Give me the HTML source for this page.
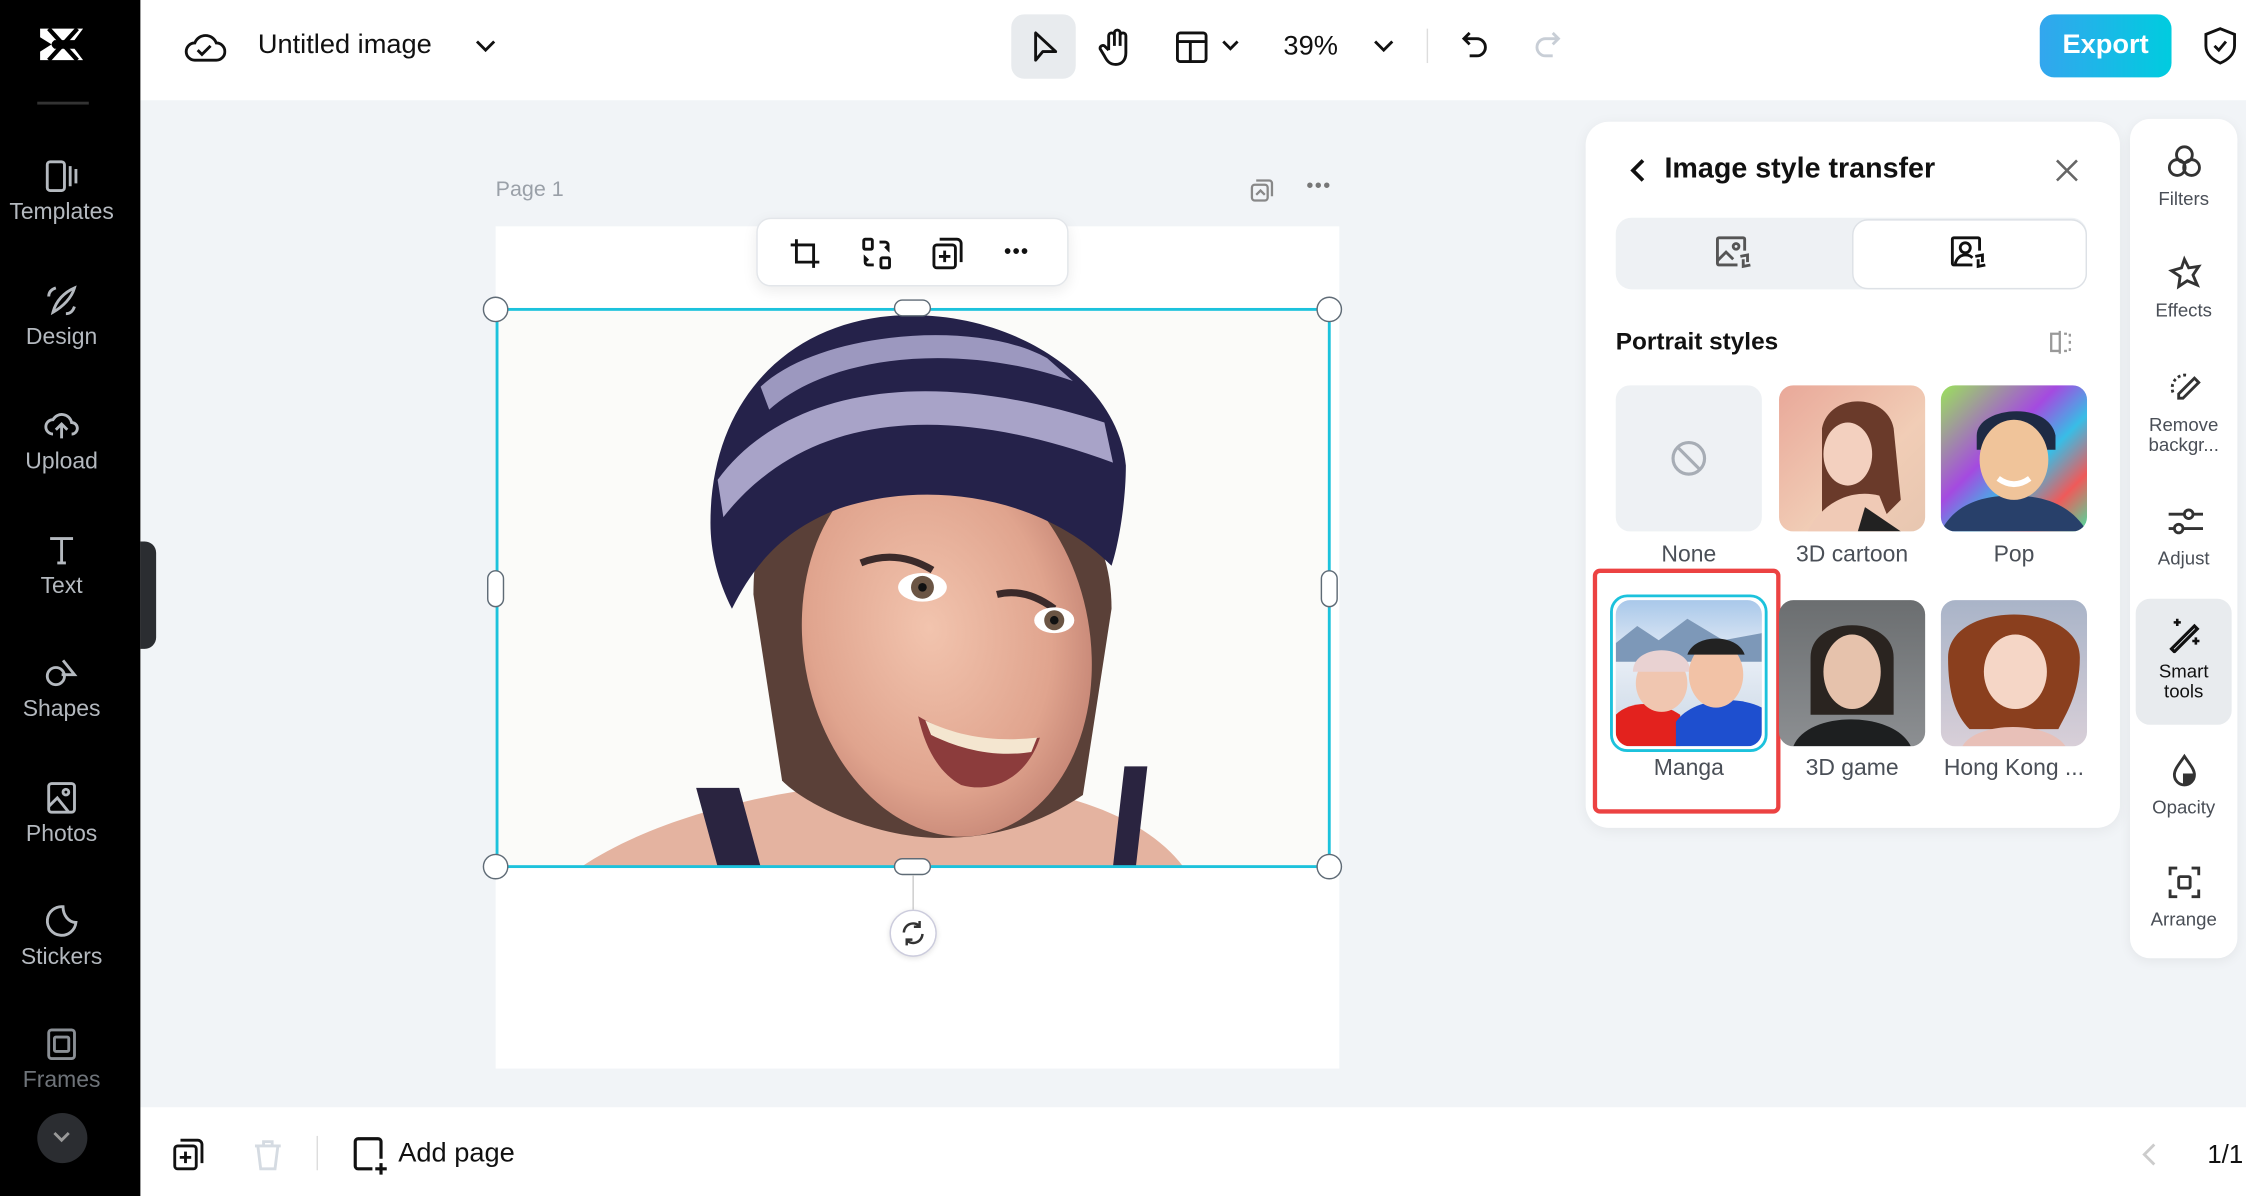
<!DOCTYPE html>
<html><head><meta charset="utf-8">
<style>
*{box-sizing:border-box;margin:0;padding:0}
html,body{width:2246px;height:1196px;overflow:hidden;background:#fff}
#w{width:1568px;height:835px;transform:scale(1.43240);transform-origin:0 0;position:relative;font-family:"Liberation Sans",sans-serif;color:#111}
.abs{position:absolute}
.sb{left:0;top:0;width:98px;height:835px;background:#000}
.si{position:absolute;left:0;width:86px;text-align:center;color:#b4b9bf;font-size:16px}
.si svg{display:block;margin:0 auto 4px}
.rc{position:absolute;left:1487px;top:83px;width:75px;height:586px;background:#fff;border-radius:14px;box-shadow:0 2px 8px rgba(0,0,0,.06)}
.ri{position:absolute;left:1487px;width:75px;text-align:center;color:#4a4f57;font-size:13px;line-height:14px}
.ri svg{display:block;margin:0 auto 6px}
.th{position:absolute;width:102px;height:102px;border-radius:10px;overflow:hidden}
.lb{position:absolute;width:130px;text-align:center;font-size:16px;color:#4a4f57}
</style></head><body><div id="w">
<div class="abs" style="left:98px;top:70px;width:1470px;height:703px;background:#f1f4f7"></div>
<div class="abs sb"></div>
<svg class="abs" style="left:26px;top:16px" width="36" height="30" viewBox="0 0 36 30"><path d="M2 4h30l-6 8H12q-4 3 0 6h14l6 8H2v-6l8-5-8-5z" fill="#fff"/><path d="M8 4l20 22M28 4L8 26" stroke="#000" stroke-width="3"/></svg>
<div class="abs" style="left:26px;top:71px;width:36px;height:2px;background:#333"></div>
<div class="si" style="top:110px"><svg width="26" height="26" viewBox="0 0 26 26" fill="none" stroke="#b4b9bf" stroke-width="2"><rect x="3" y="3" width="12" height="20" rx="2"/><path d="M19 6v14M23 8v10"/></svg>Templates</div>
<div class="si" style="top:197px"><svg width="26" height="26" viewBox="0 0 26 26" fill="none" stroke="#b4b9bf" stroke-width="2"><path d="M7 21c2-8 8-14 15-17-2 7-8 13-15 17z"/><path d="M9 4c-3 1-5 3-5 6M22 17c-1 3-3 5-6 5"/></svg>Design</div>
<div class="si" style="top:284px"><svg width="26" height="26" viewBox="0 0 26 26" fill="none" stroke="#b4b9bf" stroke-width="2"><path d="M7 19a5 5 0 010-10 7 7 0 0113 2 4 4 0 010 8M13 22v-9M9 16l4-4 4 4"/></svg>Upload</div>
<div class="si" style="top:371px"><svg width="26" height="26" viewBox="0 0 26 26" fill="none" stroke="#b4b9bf" stroke-width="2"><path d="M5 5h16M13 5v17M10 22h6"/></svg>Text</div>
<div class="si" style="top:457px"><svg width="26" height="26" viewBox="0 0 26 26" fill="none" stroke="#b4b9bf" stroke-width="2"><circle cx="9" cy="15" r="6"/><path d="M14 4l8 10h-9"/></svg>Shapes</div>
<div class="si" style="top:544px"><svg width="26" height="26" viewBox="0 0 26 26" fill="none" stroke="#b4b9bf" stroke-width="2"><rect x="4" y="3" width="18" height="20" rx="2"/><circle cx="16" cy="9" r="2"/><path d="M4 19l6-6 8 10"/></svg>Photos</div>
<div class="si" style="top:630px"><svg width="26" height="26" viewBox="0 0 26 26" fill="none" stroke="#b4b9bf" stroke-width="2"><path d="M14 3a10 10 0 1 0 9 11c-5 0-9-5-9-11z"/></svg>Stickers</div>
<div class="si" style="top:716px;color:#6f747a"><svg width="26" height="26" viewBox="0 0 26 26" fill="none" stroke="#8a8f95" stroke-width="2"><rect x="4" y="3" width="18" height="20" rx="2"/><rect x="8" y="8" width="10" height="10" rx="1"/></svg>Frames</div>
<div class="abs" style="left:26px;top:777px;width:35px;height:35px;border-radius:50%;background:#2b2d31"></div>
<svg class="abs" style="left:36px;top:788px" width="14" height="12"><path d="M2 3l5 5 5-5" stroke="#999" stroke-width="2" fill="none"/></svg>
<div class="abs" style="left:98px;top:378px;width:11px;height:75px;background:#2b2d31;border-radius:0 8px 8px 0"></div>
<svg class="abs" style="left:128px;top:18px" width="30" height="28" viewBox="0 0 30 28" fill="none" stroke="#111" stroke-width="2"><path d="M8 24a6 6 0 010-12 8 8 0 0115 0 6 6 0 010 12z"/><path d="M10 17l3 3 6-6"/></svg>
<div class="abs" style="left:180px;top:21px;font-size:19px;">Untitled image</div>
<svg class="abs" style="left:331px;top:26px" width="16" height="12"><path d="M2 3l6 6 6-6" stroke="#111" stroke-width="2" fill="none"/></svg>
<div class="abs" style="left:706px;top:10px;width:45px;height:45px;background:#e8ebee;border-radius:9px"></div>
<svg class="abs" style="left:718px;top:20px" width="24" height="26" viewBox="0 0 24 26"><path d="M5 3v19l5-6h9z" fill="none" stroke="#111" stroke-width="2" stroke-linejoin="round"/></svg>
<svg class="abs" style="left:766px;top:19px" width="26" height="28" viewBox="0 0 26 28" fill="none" stroke="#111" stroke-width="2"><path d="M8 16V6a2 2 0 014 0v7V4a2 2 0 014 0v9V6a2 2 0 014 0v12c0 5-3 8-7 8s-6-2-8-6l-3-5a2 2 0 013-2l3 3"/></svg>
<svg class="abs" style="left:820px;top:21px" width="24" height="24" viewBox="0 0 24 24" fill="none" stroke="#111" stroke-width="2"><rect x="2" y="2" width="20" height="20" rx="2"/><path d="M2 8h20M11 8v14"/></svg>
<svg class="abs" style="left:852px;top:27px" width="14" height="10"><path d="M2 2l5 5 5-5" stroke="#111" stroke-width="2" fill="none"/></svg>
<div class="abs" style="left:896px;top:22px;font-size:19px">39%</div>
<svg class="abs" style="left:958px;top:27px" width="16" height="10"><path d="M2 2l6 6 6-6" stroke="#111" stroke-width="2" fill="none"/></svg>
<div class="abs" style="left:996px;top:20px;width:1px;height:24px;background:#ddd"></div>
<svg class="abs" style="left:1018px;top:20px" width="24" height="24" viewBox="0 0 24 24" fill="none" stroke="#111" stroke-width="2"><path d="M8 3L4 7l4 4M4 7h9a6 6 0 010 12H8"/></svg>
<svg class="abs" style="left:1068px;top:20px" width="24" height="24" viewBox="0 0 24 24" fill="none" stroke="#c8ced6" stroke-width="2"><path d="M16 3l4 4-4 4M20 7h-9a6 6 0 000 12h5"/></svg>
<div class="abs" style="left:1424px;top:10px;width:92px;height:44px;border-radius:10px;background:linear-gradient(90deg,#33a6ee,#00ccdf);color:#fff;font-size:19px;font-weight:bold;text-align:center;line-height:44px">Export</div>
<svg class="abs" style="left:1537px;top:18px" width="26" height="28" viewBox="0 0 26 28" fill="none" stroke="#111" stroke-width="2"><path d="M13 2l10 4v8c0 6-5 10-10 12C8 24 3 20 3 14V6z"/><path d="M9 14l3 3 5-6"/></svg>
<div class="abs" style="left:346px;top:124px;font-size:15px;color:#9aa0a8">Page 1</div>
<svg class="abs" style="left:872px;top:124px" width="18" height="18" viewBox="0 0 18 18" fill="none" stroke="#888" stroke-width="1.6"><rect x="2" y="5" width="11" height="11" rx="2"/><path d="M5 2h9a2 2 0 012 2v9"/><path d="M5 12l3-3 3 3"/></svg>
<div class="abs" style="left:912px;top:121px;font-size:14px;color:#777;letter-spacing:1px">•••</div>
<div class="abs" style="left:346px;top:158px;width:589px;height:588px;background:#fff"></div>
<svg class="abs" style="left:346px;top:215px" width="582" height="390" viewBox="0 0 582 390">
<defs><radialGradient id="sk" cx=".45" cy=".45" r=".6"><stop offset="0" stop-color="#f2c4ae"/><stop offset=".7" stop-color="#e0a48e"/><stop offset="1" stop-color="#c48474"/></radialGradient></defs>
<rect width="582" height="390" fill="#fbfbf9"/>
<path d="M60 390c60-40 160-60 240-60s150 20 180 60z" fill="#e4b3a0"/>
<path d="M180 200c0-80 40-100 120-100s130 40 130 110l-20 130c-30 20-60 30-100 30s-90-20-110-40z" fill="#5a4038"/>
<ellipse cx="315" cy="235" rx="100" ry="135" fill="url(#sk)" transform="rotate(-10 315 235)"/>
<path d="M150 150c0-90 60-145 140-145s145 50 150 105c0 25-5 55-10 70-50-50-130-60-190-40-40 15-60 40-75 70-10-20-15-40-15-60z" fill="#25224a"/>
<path d="M155 120c40-55 130-85 270-40l6 28c-130-48-220-28-272 38z" fill="#a8a3c8"/>
<path d="M185 55c40-38 150-48 200-20l18 16c-80-28-170-18-212 20z" fill="#9c98bf"/>
<path d="M255 178q25-10 50 5M350 200q20-5 40 10" stroke="#3b2a2a" stroke-width="5" fill="none"/>
<ellipse cx="298" cy="195" rx="17" ry="10" fill="#fff"/><circle cx="298" cy="195" r="8" fill="#6b5544"/><circle cx="298" cy="195" r="3" fill="#111"/>
<ellipse cx="390" cy="218" rx="14" ry="9" fill="#fff"/><circle cx="390" cy="218" r="7" fill="#6b5544"/><circle cx="390" cy="218" r="3" fill="#111"/>
<path d="M295 285c25 15 55 20 85 15-8 25-30 40-55 33-15-8-25-25-30-48z" fill="#8c3c3c"/>
<path d="M300 288c25 12 50 15 78 12l-4 10c-25 4-50-2-70-12z" fill="#f4e6d0"/>
<path d="M140 335l15 55h30l-15-55zM455 320l-8 70h-16l8-70z" fill="#2a2440"/>
</svg>
<div class="abs" style="left:346px;top:215px;width:583px;height:391px;border:2px solid #1cc2dc"></div>
<div class="abs" style="left:337px;top:207px;width:18px;height:18px;border-radius:50%;background:#fff;border:1.5px solid #5f6b76"></div>
<div class="abs" style="left:919px;top:207px;width:18px;height:18px;border-radius:50%;background:#fff;border:1.5px solid #5f6b76"></div>
<div class="abs" style="left:337px;top:596px;width:18px;height:18px;border-radius:50%;background:#fff;border:1.5px solid #5f6b76"></div>
<div class="abs" style="left:919px;top:596px;width:18px;height:18px;border-radius:50%;background:#fff;border:1.5px solid #5f6b76"></div>
<div class="abs" style="left:624px;top:209px;width:26px;height:12px;border-radius:6px;background:#fff;border:1.5px solid #5f6b76"></div>
<div class="abs" style="left:624px;top:599px;width:26px;height:12px;border-radius:6px;background:#fff;border:1.5px solid #5f6b76"></div>
<div class="abs" style="left:340px;top:398px;width:12px;height:26px;border-radius:6px;background:#fff;border:1.5px solid #5f6b76"></div>
<div class="abs" style="left:922px;top:398px;width:12px;height:26px;border-radius:6px;background:#fff;border:1.5px solid #5f6b76"></div>
<div class="abs" style="left:637px;top:611px;width:1px;height:24px;background:#ccc"></div>
<div class="abs" style="left:621px;top:635px;width:33px;height:33px;border-radius:50%;background:#fff;border:1px solid #ccd;box-shadow:0 1px 4px rgba(0,0,0,.12)"></div>
<svg class="abs" style="left:628px;top:642px" width="19" height="19" viewBox="0 0 19 19" fill="none" stroke="#333" stroke-width="1.7"><path d="M3 9a6.5 6.5 0 0111-4.5M16 10a6.5 6.5 0 01-11 4.5M14 1v4h-4M5 18v-4h4"/></svg>
<div class="abs" style="left:528px;top:152px;width:218px;height:48px;background:#fff;border-radius:10px;border:1px solid #e3e6ea;box-shadow:0 3px 10px rgba(0,0,0,.08)"></div>
<svg class="abs" style="left:550px;top:165px" width="24" height="24" viewBox="0 0 24 24" fill="none" stroke="#111" stroke-width="2"><path d="M6 2v16h16M2 6h16v16"/></svg>
<svg class="abs" style="left:600px;top:165px" width="24" height="24" viewBox="0 0 24 24" fill="none" stroke="#111" stroke-width="2"><rect x="3" y="2" width="6" height="7" rx="1"/><rect x="15" y="15" width="6" height="7" rx="1"/><path d="M14 4h4a2 2 0 012 2v3l-2-2M10 20H6a2 2 0 01-2-2v-3l2 2"/></svg>
<svg class="abs" style="left:650px;top:165px" width="24" height="24" viewBox="0 0 24 24" fill="none" stroke="#111" stroke-width="2"><rect x="2" y="6" width="15" height="16" rx="2"/><path d="M6 2h12a3 3 0 013 3v13M9.5 10v8M5.5 14h8"/></svg>
<div class="abs" style="left:701px;top:167px;font-size:14px;letter-spacing:1px;font-weight:bold">•••</div>
<svg class="abs" style="left:120px;top:794px" width="24" height="24" viewBox="0 0 24 24" fill="none" stroke="#111" stroke-width="2"><rect x="2" y="6" width="15" height="16" rx="2"/><path d="M6 2h12a3 3 0 013 3v13M9.5 10v8M5.5 14h8"/></svg>
<svg class="abs" style="left:176px;top:794px" width="22" height="24" viewBox="0 0 22 24" fill="none" stroke="#d5dbe2" stroke-width="2"><path d="M2 6h18M8 6V3h6v3M4 6l2 16h10l2-16"/></svg>
<div class="abs" style="left:221px;top:793px;width:1px;height:24px;background:#ddd"></div>
<svg class="abs" style="left:246px;top:793px" width="26" height="28" viewBox="0 0 26 28" fill="none" stroke="#111" stroke-width="2.2"><path d="M14 23H4a2 2 0 01-2-2V4a2 2 0 012-2h14a2 2 0 012 2v12M20 19v8M16 23h8"/></svg>
<div class="abs" style="left:278px;top:795px;font-size:19px">Add page</div>
<svg class="abs" style="left:1494px;top:797px" width="14" height="18"><path d="M10 2L3 9l7 7" stroke="#ccc" stroke-width="2" fill="none"/></svg>
<div class="abs" style="left:1541px;top:796px;font-size:18px">1/1</div>
<div class="abs" style="left:1107px;top:85px;width:373px;height:493px;background:#fff;border-radius:16px;box-shadow:0 2px 10px rgba(0,0,0,.06)"></div>
<svg class="abs" style="left:1136px;top:109px" width="14" height="20"><path d="M11 3L4 10l7 7" stroke="#111" stroke-width="2.6" fill="none"/></svg>
<div class="abs" style="left:1162px;top:107px;font-size:20px;font-weight:bold">Image style transfer</div>
<svg class="abs" style="left:1433px;top:109px" width="20" height="20"><path d="M3 3l14 14M17 3L3 17" stroke="#666" stroke-width="1.8"/></svg>
<div class="abs" style="left:1128px;top:152px;width:329px;height:50px;background:#eef1f4;border-radius:11px"></div>
<div class="abs" style="left:1293px;top:153px;width:164px;height:49px;background:#fff;border:1.5px solid #dde1e6;border-radius:11px"></div>
<svg class="abs" style="left:1197px;top:164px" width="28" height="26" viewBox="0 0 28 26" fill="none" stroke="#555" stroke-width="2"><path d="M16 21H3a1 1 0 01-1-1V3a1 1 0 011-1h17a1 1 0 011 1v8"/><path d="M2 18l6-6 5 5"/><circle cx="15" cy="8" r="2"/><path d="M18 15l5-1v5M25 21l-5 1v-5"/></svg>
<svg class="abs" style="left:1361px;top:164px" width="28" height="26" viewBox="0 0 28 26" fill="none" stroke="#111" stroke-width="2"><path d="M16 21H3a1 1 0 01-1-1V3a1 1 0 011-1h17a1 1 0 011 1v8"/><circle cx="11" cy="9" r="3.5"/><path d="M4 20c1-4 4-6 7-6s4 1 5 2"/><path d="M18 15l5-1v5M25 21l-5 1v-5"/></svg>
<div class="abs" style="left:1128px;top:229px;font-size:17px;font-weight:bold;color:#111">Portrait styles</div>
<svg class="abs" style="left:1429px;top:229px" width="20" height="20" viewBox="0 0 20 20" fill="none" stroke="#999" stroke-width="1.6"><path d="M9 2v16M9 4H3v12h6"/><path d="M12 4h2M16 4v2M16 9v2M16 14v2M12 16h2" /></svg>
<div class="th" style="left:1128px;top:269px;background:#eef1f4"></div>
<svg class="abs" style="left:1165px;top:306px" width="28" height="28"><circle cx="14" cy="14" r="11" stroke="#a7adb5" stroke-width="2.2" fill="none"/><path d="M6 6l16 16" stroke="#a7adb5" stroke-width="2.2"/></svg>
<div class="th" style="left:1242px;top:269px;background:linear-gradient(135deg,#e9a899,#f1cdb6 60%,#e7c6b0)"><svg width="102" height="102"><path d="M30 30c5-25 45-25 50 0l5 50-10 10H30z" fill="#6a3a2a"/><ellipse cx="48" cy="48" rx="17" ry="22" fill="#f3d0bf"/><path d="M20 102c10-20 30-30 50-25l10 25z" fill="#f0cab6"/><path d="M60 85l25 17h-30z" fill="#222"/></svg></div>
<div class="th" style="left:1355px;top:269px;background:linear-gradient(135deg,#9be25b 0%,#a44ae0 40%,#38bde6 60%,#ef5a5a 80%,#48e0a0)"><svg width="102" height="102"><path d="M0 102c10-20 30-25 50-25s40 5 52 25z" fill="#28406a"/><path d="M25 35c0-20 50-25 55 0v10H25z" fill="#1e2a44"/><ellipse cx="51" cy="52" rx="24" ry="28" fill="#f0c49a"/><path d="M40 65q11 8 22 0" stroke="#fff" stroke-width="4" fill="none"/></svg></div>
<div class="lb" style="left:1114px;top:379px">None</div>
<div class="lb" style="left:1228px;top:379px">3D cartoon</div>
<div class="lb" style="left:1341px;top:379px">Pop</div>
<div class="abs" style="left:1112px;top:397px;width:131px;height:171px;border:3px solid #ec4242;border-radius:5px"></div>
<div class="abs" style="left:1124px;top:415px;width:110px;height:110px;border:2.5px solid #1cc2dc;border-radius:12px"></div>
<div class="th" style="left:1128px;top:419px;background:linear-gradient(180deg,#a9c8ea,#e8eef6 40%,#c9d6e4)"><svg width="102" height="102"><path d="M0 30l15-12 15 10 20-15 25 15 27-5v20H0z" fill="#7d98b8"/><path d="M0 80c10-10 30-10 45 0v22H0z" fill="#e3221e"/><path d="M42 85c10-15 40-20 60-10v27H42z" fill="#1e4fcf"/><ellipse cx="32" cy="58" rx="18" ry="20" fill="#f0c6b0"/><path d="M12 50c0-20 40-20 40 0z" fill="#e9d2d2"/><ellipse cx="70" cy="52" rx="19" ry="23" fill="#f2c2a6"/><path d="M50 38c5-15 35-15 40 0z" fill="#222"/></svg></div>
<div class="th" style="left:1242px;top:419px;background:linear-gradient(180deg,#6b6e70,#8c8f92)"><svg width="102" height="102"><path d="M22 40c0-30 58-30 58 0v40H22z" fill="#2a2420"/><ellipse cx="51" cy="50" rx="20" ry="26" fill="#e6c2ac"/><path d="M10 102c10-25 70-25 82 0z" fill="#1d1f20"/></svg></div>
<div class="th" style="left:1355px;top:419px;background:linear-gradient(180deg,#a9b4c8,#d8cfd8)"><svg width="102" height="102"><path d="M5 40c0-40 92-40 92 0 0 25-10 40-15 50H20C10 80 5 65 5 40z" fill="#8a3f1e"/><ellipse cx="52" cy="50" rx="22" ry="26" fill="#f5d6c6"/><path d="M15 102c10-18 60-18 72 0z" fill="#e8c0b8"/></svg></div>
<div class="lb" style="left:1114px;top:528px">Manga</div>
<div class="lb" style="left:1228px;top:528px">3D game</div>
<div class="lb" style="left:1341px;top:528px">Hong Kong ...</div>
<div class="rc"></div>
<div class="abs" style="left:1491px;top:418px;width:67px;height:88px;background:#e8ebee;border-radius:10px"></div>
<div class="ri" style="top:100px"><svg width="26" height="26" viewBox="0 0 26 26" fill="none" stroke="#333" stroke-width="2"><circle cx="13" cy="8" r="5.5"/><circle cx="8" cy="17" r="5.5"/><circle cx="18" cy="17" r="5.5"/></svg>Filters</div>
<div class="ri" style="top:178px"><svg width="26" height="26" viewBox="0 0 26 26" fill="none" stroke="#333" stroke-width="2"><path d="M13 3l3 6 7-1-4 6 3 7-7-3-6 4 1-7-6-4 7-2z"/></svg>Effects</div>
<div class="ri" style="top:258px"><svg width="26" height="26" viewBox="0 0 26 26" fill="none" stroke="#333" stroke-width="2"><path d="M5 16a9 9 0 0110-12" stroke-dasharray="2 2"/><path d="M20 6l3 3-11 11H9v-3z"/></svg>Remove<br>backgr...</div>
<div class="ri" style="top:351px"><svg width="26" height="26" viewBox="0 0 26 26" fill="none" stroke="#333" stroke-width="2"><path d="M2 8h24M2 18h24"/><circle cx="16" cy="8" r="3" fill="#fff"/><circle cx="9" cy="18" r="3" fill="#fff"/></svg>Adjust</div>
<div class="ri" style="top:430px;color:#111"><svg width="26" height="26" viewBox="0 0 26 26" fill="none" stroke="#111" stroke-width="2.2"><path d="M4 23L20 7l2 2L6 25z"/><path d="M8 2v5M5.5 4.5h5M21 15v5M18.5 17.5h5" stroke-width="1.8"/></svg>Smart<br>tools</div>
<div class="ri" style="top:525px"><svg width="26" height="26" viewBox="0 0 26 26" fill="none" stroke="#333" stroke-width="2"><path d="M13 3c-4 6-7 9-7 13a7 7 0 0014 0c0-4-3-7-7-13z"/><path d="M13 22a6 6 0 006-6h-6z" fill="#333"/></svg>Opacity</div>
<div class="ri" style="top:603px"><svg width="26" height="26" viewBox="0 0 26 26" fill="none" stroke="#333" stroke-width="2"><path d="M3 8V3h5M18 3h5v5M23 18v5h-5M8 23H3v-5" /><rect x="9" y="9" width="8" height="8" rx="1"/></svg>Arrange</div>
</div></body></html>
